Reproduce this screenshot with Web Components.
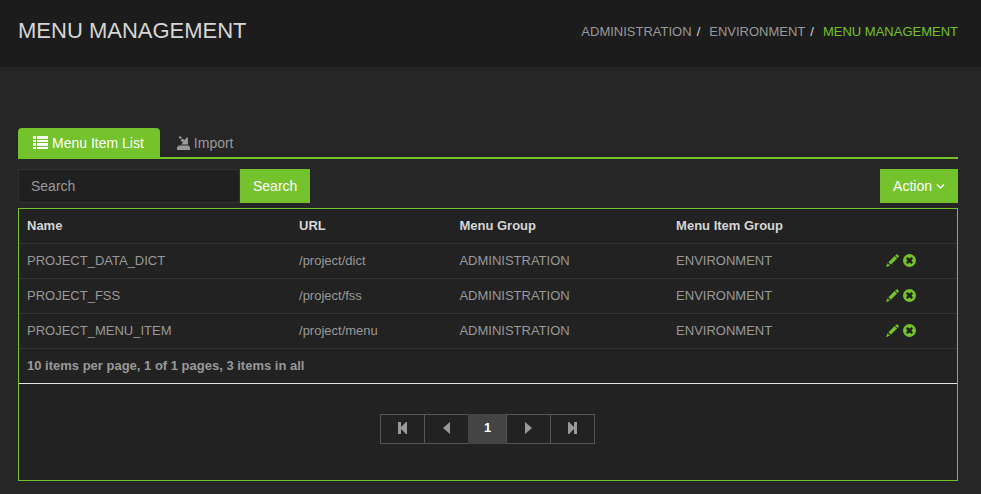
<!DOCTYPE html>
<html lang="en">
<head>
<meta charset="utf-8">
<title>Menu Management</title>
<style>
  :root {
    --green: #74c22c;
    --page: #262626;
    --panel: #222222;
    --text: #999999;
    --bright: #d6d6d6;
    --rule: #333333;
  }
  body {
    margin: 0;
    min-height: 100vh;
    background: var(--page);
    color: var(--text);
    font: 13px/18px "Liberation Sans", Arial, sans-serif;
  }
</style>
</head>
<body>
<menu-page></menu-page>

<script>
const shapes = {
  list: '<path d="M0 0h3v3H0zM4 0h11v3H4zM0 4h3v2H0zM4 4h11v2H4zM0 7h3v3H0zM4 7h11v3H4zM0 11h3v2H0zM4 11h11v2H4z"/>',
  import: '<path d="M3 0L5 1.500 3.500 3 1.500 1.500zM5.500 2.500L7.500 4 9.500 1.500H11V8.500H4L6 6.500 3.500 4.500zM1.500 9.500H11.500L13 11.500V14H0V11.500z"/>',
  down: '<path d="M1 1.500l3.500 3.500L8 1.500" fill="none" stroke="currentColor" stroke-width="1.500"/>',
  pencil: '<path d="M10.500 0.500Q11 0 11.500 0.500L12.700 1.700Q13.200 2.200 12.700 2.800L11.600 3.900 9.200 1.500zM8.700 2L11.100 4.400 4.800 10.700 2.400 8.300zM1.500 9.200L3.900 11.600 0 13.200z"/>',
  remove: '<path fill-rule="evenodd" d="M6.500 0a6.500 6.500 0 1 0 0 13a6.500 6.500 0 1 0 0-13zM4.500 3L6.500 4.500 8.500 3 10 4.500 8.500 6.500 10 8.500 8.500 10 6.500 8.500 4.500 10 3 8.500 4.500 6.500 3 4.500z"/>',
  first: '<path d="M0 0h3v5L8 0h1v12H8L3 7v5H0z"/>',
  prev: '<path d="M7 0v12L0 6z"/>',
  next: '<path d="M0 0v12L7 6z"/>',
  last: '<path d="M9 0h-3v5L1 0H0v12h1L6 7v5h3z"/>'
};
const sizes = { list: [15, 13], import: [13, 14], down: [9, 7], pencil: [13, 13], remove: [13, 13],
  first: [9, 12], prev: [7, 12], next: [7, 12], last: [9, 12] };

function define(name, markup, setup) {
  const template = document.createElement('template');
  template.innerHTML = '<style>*{box-sizing:border-box}button,input{font:inherit}</style>' + markup;
  customElements.define(name, class extends HTMLElement {
    constructor() {
      super();
      this.attachShadow({ mode: 'open' }).append(template.content.cloneNode(true));
    }
    connectedCallback() { if (setup) setup(this, this.shadowRoot); }
  });
}

define('ui-icon', `
  <style>:host{display:inline-flex;flex:none} svg{display:block;fill:currentColor}</style>
  <svg aria-hidden="true"></svg>`,
  (host, root) => {
    const name = host.getAttribute('name');
    const [w, h] = sizes[name];
    const svg = root.querySelector('svg');
    svg.setAttribute('width', w);
    svg.setAttribute('height', h);
    svg.setAttribute('viewBox', `0 0 ${w} ${h}`);
    svg.innerHTML = shapes[name];
  });

define('page-header', `
  <style>
    :host{display:flex;justify-content:space-between;align-items:flex-start;padding:16px 23px 21px 18px;background:#1c1c1c}
    h1{margin:0;font-size:22px;line-height:30px;font-weight:400;color:var(--bright)}
    nav{padding-top:7px}
  </style>
  <h1><slot></slot></h1>
  <nav aria-label="Breadcrumb"><slot name="trail"></slot></nav>`);

define('bread-crumbs', `
  <style>
    :host{display:block}
    ol{display:flex;gap:9px;margin:0;padding:0;list-style:none}
    li{display:flex;gap:5px;color:var(--bright)}
    a{color:var(--text);text-decoration:none}
    a[aria-current]{color:var(--green)}
  </style>
  <ol>
    <li><a href="#administration">ADMINISTRATION</a><span>/</span></li>
    <li><a href="#environment">ENVIRONMENT</a><span>/</span></li>
    <li><a href="#menu" aria-current="page">MENU MANAGEMENT</a></li>
  </ol>`);

define('tab-bar', `
  <style>
    :host{display:flex;gap:2px;border-bottom:2px solid var(--green);font-size:14px}
    button{display:flex;align-items:center;gap:4px;height:29px;padding:0 16px 0 15px;border:0;border-radius:4px 4px 0 0;background:none;color:var(--text)}
    button[aria-selected=true]{background:var(--green);color:#fff}
  </style>
  <button role="tab" aria-selected="true"><ui-icon name="list"></ui-icon>Menu Item List</button>
  <button role="tab" aria-selected="false"><ui-icon name="import"></ui-icon>Import</button>`);

define('tool-bar', `
  <style>
    :host{display:flex;justify-content:space-between;margin:10px 0 5px;font-size:14px}
    form{display:flex}
    input{width:222px;height:34px;padding:0 12px;border:1px solid #303030;border-radius:0;background:#202020;color:var(--text);outline:0}
    input::placeholder{color:var(--text);opacity:1}
    button{display:flex;align-items:center;gap:4px;height:34px;padding:0 13px;border:0;background:var(--green);color:#fff}
  </style>
  <form>
    <input type="text" placeholder="Search" aria-label="Search">
    <button type="button">Search</button>
  </form>
  <button type="button" aria-haspopup="menu">Action<ui-icon name="down"></ui-icon></button>`);

define('item-table', `
  <style>
    :host{display:block}
    table{width:100%;table-layout:fixed;border-collapse:collapse;border-bottom:1px solid #e5e5e5}
    th,td{height:35px;padding:0 8px;text-align:left;vertical-align:middle}
    thead th,thead td{height:34px}
    th{color:var(--bright)}
    tbody tr,tfoot tr{border-top:1px solid var(--rule)}
    tfoot td{font-weight:700}
    .acts{display:flex;gap:4px}
    button{display:flex;padding:0;border:0;background:none;color:var(--green)}
    .name{width:29%} .url{width:17.1%} .group{width:23.1%} .item{width:22.4%}
  </style>
  <table>
    <thead><tr><th class="name">Name</th><th class="url">URL</th><th class="group">Menu Group</th><th class="item">Menu Item Group</th><td></td></tr></thead>
    <tbody></tbody>
    <tfoot><tr><td colspan="5">10 items per page, 1 of 1 pages, 3 items in all</td></tr></tfoot>
  </table>`,
  (host, root) => {
    const rows = [['PROJECT_DATA_DICT', '/project/dict'], ['PROJECT_FSS', '/project/fss'], ['PROJECT_MENU_ITEM', '/project/menu']];
    root.querySelector('tbody').innerHTML = rows.map(([name, url]) => `<tr>
      <td>${name}</td><td>${url}</td><td>ADMINISTRATION</td><td>ENVIRONMENT</td>
      <td><div class="acts"><button aria-label="Edit ${name}"><ui-icon name="pencil"></ui-icon></button><button aria-label="Delete ${name}"><ui-icon name="remove"></ui-icon></button></div></td>
    </tr>`).join('');
  });

define('page-nav', `
  <style>
    :host{display:flex;justify-content:center;padding:30px 0 36px}
    button{display:flex;align-items:center;justify-content:center;width:45px;height:30px;margin-left:-1px;padding:0 0 2px;border:1px solid #555;background:none;color:var(--text)}
    button:first-child{margin-left:0}
    button[aria-current]{width:39px;border-color:#444;background:#444;color:#fff;font-weight:700}
  </style>
  <button aria-label="First page"><ui-icon name="first"></ui-icon></button>
  <button aria-label="Previous page"><ui-icon name="prev"></ui-icon></button>
  <button aria-current="page">1</button>
  <button aria-label="Next page"><ui-icon name="next"></ui-icon></button>
  <button aria-label="Last page"><ui-icon name="last"></ui-icon></button>`);

define('menu-page', `
  <style>
    :host{display:block}
    main{padding:61px 23px 13px 18px}
    section{border:1px solid var(--green);background:var(--panel)}
  </style>
  <page-header>MENU MANAGEMENT<bread-crumbs slot="trail"></bread-crumbs></page-header>
  <main>
    <tab-bar role="tablist"></tab-bar>
    <tool-bar></tool-bar>
    <section><item-table></item-table><page-nav></page-nav></section>
  </main>`);
</script>
</body>
</html>
